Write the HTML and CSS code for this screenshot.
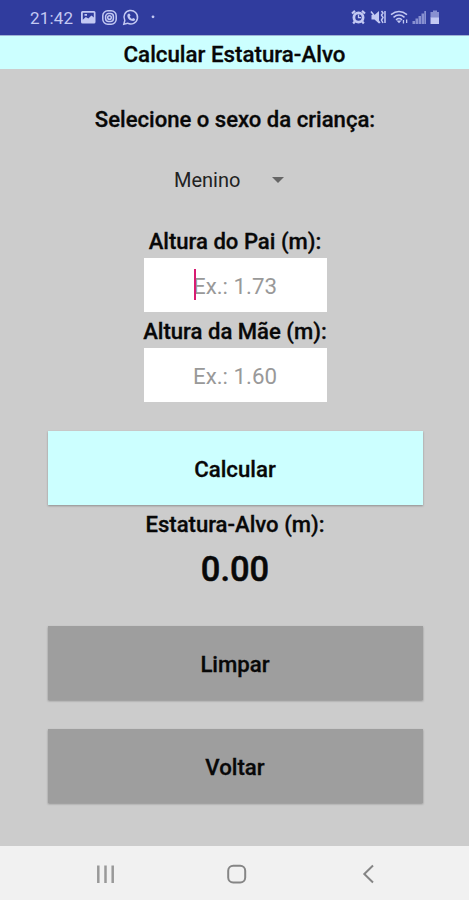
FILE: index.html
```html
<!DOCTYPE html>
<html lang="pt-BR">
<head>
<meta charset="utf-8">
<title>Calcular Estatura-Alvo</title>
<link rel="stylesheet" href="styles.css">
</head>
<body>
<div class="status">
  <span class="time">21:42</span>
  <svg class="notifications" width="80" height="20" viewBox="0 0 80 20">
    <path fill="currentColor" fill-rule="evenodd" d="M2.500 3h11.500q1.500 0 1.500 1.500v9.500q0 1.500-1.500 1.500H2.500Q1 15.500 1 14V4.500Q1 3 2.500 3zM2.800 4.800v7l3-2.800 2.500 1.500 3.200-3 2.300 2V4.800zM4.500 6h2.500v1.800H4.500z"/>
    <g fill="none" stroke="currentColor" stroke-width="1.500">
      <rect x="22.800" y="2.800" width="13.400" height="13.400" rx="5"/>
      <rect x="25.600" y="5.600" width="7.800" height="7.800" rx="3"/>
      <circle cx="29.500" cy="9.500" r="1.800"/>
      <path d="M43.800 16.200l1-3.700a6.800 6.800 0 1 1 2.700 2.700z"/>
    </g>
    <path fill="currentColor" d="M48 6q1.200-1.200 2 .3l.5 1.300-.8 1.200q.8 1.500 2.300 2.100l1.100-1 2 1q.2 2-2 2.200Q48 12.500 47.300 8q0-1.300.7-2z"/>
    <circle cx="73" cy="8.800" r="1.400" fill="currentColor"/>
  </svg>
  <svg class="system" width="92" height="20" viewBox="0 0 92 20">
    <g fill="none" stroke="currentColor">
      <circle cx="7.500" cy="9.500" r="4.600" stroke-width="2.800"/>
      <path stroke-width="2.200" d="M1 5.500l3-2.600M14 5.500l-3-2.600M3.800 13.500L2.200 15.500M11.200 13.500l1.600 2"/>
      <path stroke-width="1.300" d="M7.500 6.500v3.200H10"/>
    </g>
    <path fill="currentColor" d="M20.500 7h3L28 3v12.500l-4.500-4h-3z"/>
    <path fill="none" stroke="currentColor" stroke-width="1.500" d="M20 3.500l9 11.500M30.500 3L32 5l-1.500 2L32 9.500 30.500 12l1.500 3M34 3v12"/>
    <g fill="none" stroke="currentColor" stroke-width="1.500">
      <path d="M40 6.700q8-6.500 16 0M42.500 9.300q5.500-4.500 11 0M45 11.800q3-2.500 6 0"/>
    </g>
    <path fill="currentColor" d="M45.500 12.500h5L48 15.300zM51.800 12h1.300v3.500h-1.300zM55 11.500h1.300V15H55z"/>
    <g fill="currentColor" opacity=".6">
      <path d="M61.500 13H64v3h-2.500zM64.500 10.500H67V16h-2.500zM67.500 8H70v8h-2.500zM70.500 5.500H73V16h-2.500zM73.300 3H75v13h-1.700z"/>
      <path d="M82 2.500h4V4h2v6h-8.500V4H82z"/>
    </g>
    <path fill="currentColor" d="M79.500 9.500H88V16h-8.500z"/>
  </svg>
</div>
<header class="title">Calcular Estatura-Alvo</header>
<main>
  <h2 class="label question">Selecione o sexo da criança:</h2>
  <div class="select"><span>Menino</span><i class="arrow"></i></div>
  <div class="label father">Altura do Pai (m):</div>
  <div class="field"><span class="hint">Ex.: 1.73</span><i class="caret"></i></div>
  <div class="label mother">Altura da Mãe (m):</div>
  <div class="field"><span class="hint">Ex.: 1.60</span></div>
  <button class="btn primary">Calcular</button>
  <div class="label target">Estatura-Alvo (m):</div>
  <div class="result">0.00</div>
  <button class="btn clear">Limpar</button>
  <button class="btn back">Voltar</button>
</main>
<nav class="nav">
  <svg width="469" height="54" viewBox="0 0 469 54" fill="none" stroke="#858585" stroke-width="2">
    <path stroke="#999" stroke-width="2.500" d="M98.300 19.500v17.500M105.500 19.500v17.500M112.700 19.500v17.500"/>
    <rect x="228.200" y="19.700" width="17" height="16.800" rx="5"/>
    <path d="M373 19.500l-8.700 8.500 8.700 8.500"/>
  </svg>
</nav>
</body>
</html>
```
FILE: styles.css
```css
* { box-sizing: border-box; }
body {
  margin: 0;
  width: 469px;
  height: 900px;
  display: flex;
  flex-direction: column;
  background: #ccc;
  color: #080808;
  font-family: Roboto, "Liberation Sans", sans-serif;
  overflow: hidden;
}
.status {
  height: 35px;
  flex: none;
  display: flex;
  align-items: center;
  padding: 0 26px 0 30px;
  background: #303c9e;
  color: #c3c9f3;
}
.time { width: 50px; font-size: 17px; line-height: 20px; letter-spacing: .2px; }
.system { margin-left: auto; }
.title {
  height: 34px;
  flex: none;
  line-height: 37px;
  background: #cff;
  border-top: 1px solid #9fb3d4;
  text-align: center;
  font-size: 22.3px;
  font-weight: 500;
  -webkit-text-stroke: .3px;
}
main {
  flex: 1;
  display: flex;
  flex-direction: column;
  align-items: center;
  padding-left: 1px;
}
.label {
  margin: 0;
  font-size: 22.1px;
  font-weight: 500;
  line-height: 28px;
  white-space: nowrap;
  -webkit-text-stroke: .3px;
}
.question { margin-top: 36px; }
.select {
  display: flex;
  align-items: center;
  justify-content: space-between;
  width: 110px;
  height: 28px;
  margin: 33px 0 0 -12px;
  font-size: 20px;
  color: #222;
}
.arrow {
  border: 6px solid transparent;
  border-top-color: #666;
  border-bottom: 0;
}
.father { margin-top: 33px; }
.field {
  position: relative;
  width: 183px;
  height: 54px;
  margin-top: 3px;
  background: #fff;
  text-align: center;
  line-height: 56px;
  font-size: 22.3px;
  color: #999;
}
.caret { position: absolute; left: 50px; top: 11px; width: 2px; height: 31px; background: #d81b72; }
.mother { margin-top: 5px; }
.btn {
  width: 375px;
  height: 74px;
  padding: 0;
  border: 0;
  background: #9e9e9e;
  color: #080808;
  font: 500 22.2px/76px Roboto, "Liberation Sans", sans-serif;
  -webkit-text-stroke: .3px;
  box-shadow: 0 1px 2px rgba(0, 0, 0, .3);
}
.primary { margin-top: 29px; background: #cff; }
.target { margin-top: 5px; }
.result { margin-top: 10px; font-size: 34.5px; font-weight: 500; line-height: 42px; -webkit-text-stroke: .5px; }
.clear { margin-top: 36px; }
.back { margin-top: 29px; }
.nav { height: 54px; flex: none; background: #f1f1f1; }
.nav svg { display: block; }
```
